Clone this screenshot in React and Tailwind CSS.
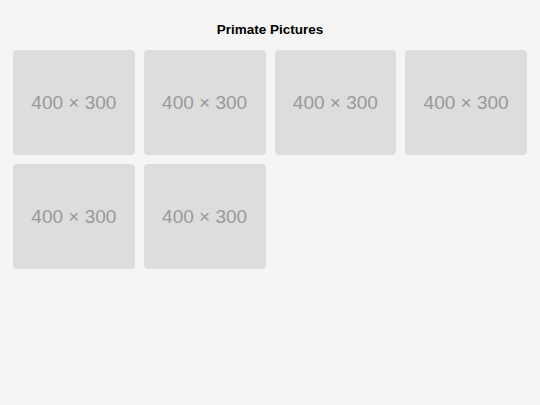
import React from 'react';

const pictures = [1, 2, 3, 4, 5, 6];

const App = () => {
    return (
        <div className="min-h-screen w-full bg-[#f5f5f5] font-['Liberation_Sans',Arial,sans-serif]">
            {/* Header */}
            <div className="pt-[20px] mb-[10px] text-center">
                <h1 className="text-[13.5px] leading-[20px] font-bold text-black">Primate Pictures</h1>
            </div>

            {/* Grid */}
            <div className="grid grid-cols-4 gap-[9px] px-[13px]">
                {pictures.map((id) => (
                    <div
                        key={id}
                        className="h-[105px] rounded-[4px] bg-[#dddddd] flex items-center justify-center pt-[2px]"
                    >
                        <span className="text-[19px] text-[#999999]">400 × 300</span>
                    </div>
                ))}
            </div>
        </div>
    );
};

export default App;
